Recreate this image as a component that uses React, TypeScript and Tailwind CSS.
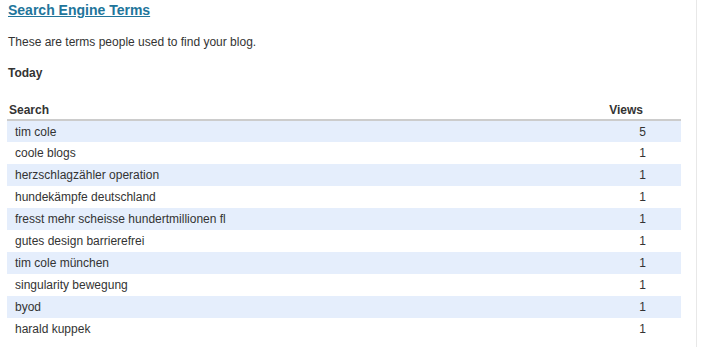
import React from 'react';

const ROWS: [string, number][] = [
  ['tim cole', 5],
  ['coole blogs', 1],
  ['herzschlagzähler operation', 1],
  ['hundekämpfe deutschland', 1],
  ['fresst mehr scheisse hundertmillionen fl', 1],
  ['gutes design barrierefrei', 1],
  ['tim cole münchen', 1],
  ['singularity bewegung', 1],
  ['byod', 1],
  ['harald kuppek', 1],
];

export default function App() {
  return (
    <div className="w-[702px] h-[347px] bg-white overflow-hidden font-['Liberation_Sans',Arial,sans-serif] text-[#333]">
      <div className="w-[697px] h-full border-r border-[#e8e8e8] pl-[7px] pr-[15px]">
        <h2 className="text-[14px] leading-[20px] font-bold text-[#21759b] underline ml-[1px]">Search Engine Terms</h2>
        <p className="text-[12px] leading-[16px] mt-[14px] ml-[1px]">These are terms people used to find your blog.</p>
        <h3 className="text-[12px] leading-[16px] font-bold mt-[15px] ml-[1px]">Today</h3>
        <table className="w-[674px] mt-[16px] text-[12px] border-collapse">
          <thead>
            <tr className="border-b-2 border-[#cccccc]">
              <th className="text-left font-bold px-[2px] h-[23px] pt-[3px] align-middle">Search</th>
              <th className="text-right font-bold pr-[38px] h-[23px] pt-[3px] align-middle">Views</th>
            </tr>
          </thead>
          <tbody>
            {ROWS.map(([term, views], i) => (
              <tr key={term} className={i % 2 === 0 ? 'bg-[#e5eefc]' : 'bg-white'}>
                <td className="h-[22px] pl-[8px]">{term}</td>
                <td className="h-[22px] text-right pr-[35px]">{views}</td>
              </tr>
            ))}
          </tbody>
        </table>
      </div>
    </div>
  );
}
